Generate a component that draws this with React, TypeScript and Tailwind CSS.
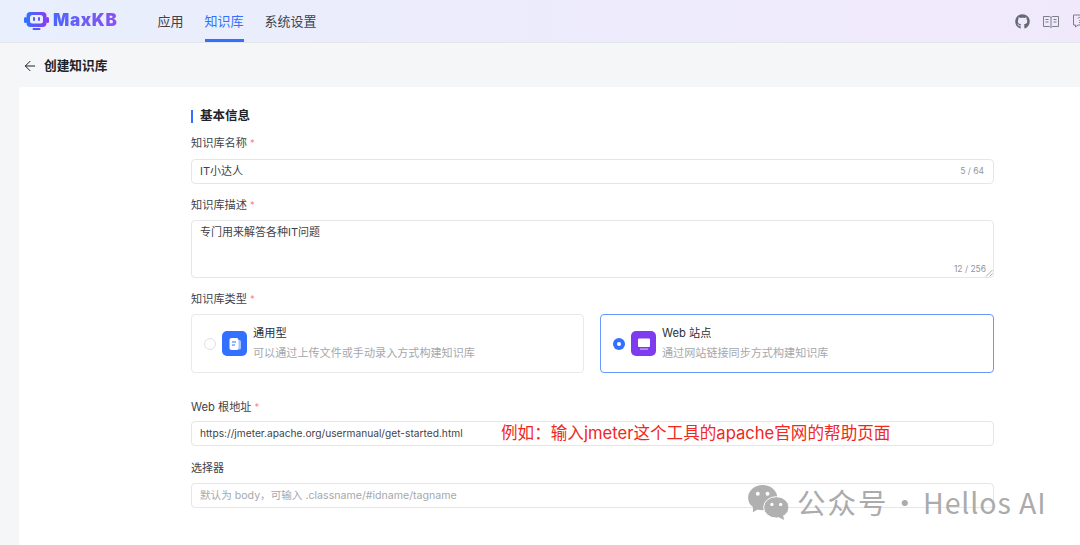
import React from "react";
import { ArrowLeft } from "lucide-react";
import { FaGithub } from "react-icons/fa";

const font = { fontFamily: '"Inter", "Noto Sans CJK SC", sans-serif' };

function Logo() {
  return (
    <svg width="25" height="20" viewBox="0 0 25 20">
      <defs>
        <linearGradient id="lg" x1="0" x2="1">
          <stop offset="0" stopColor="#3370ff" />
          <stop offset="1" stopColor="#8b3df5" />
        </linearGradient>
      </defs>
      <rect x="0" y="6" width="3" height="6" rx="1.5" fill="#3370ff" />
      <rect x="22" y="6" width="3" height="6" rx="1.5" fill="#8b3df5" />
      <rect x="2.5" y="1" width="20" height="15" rx="4" fill="url(#lg)" />
      <rect x="6" y="4" width="13" height="8.5" rx="2.5" fill="#e8effd" />
      <rect x="9" y="6" width="2" height="4" rx="1" fill="#5a55f8" />
      <rect x="14" y="6" width="2" height="4" rx="1" fill="#6a4ff8" />
      <rect x="8.5" y="17" width="8" height="2" rx="1" fill="#5a55f8" />
    </svg>
  );
}

function Label({ children }: { children: React.ReactNode }) {
  return (
    <div className="flex h-[18px] items-center text-[11.2px] leading-[18px] text-[#3f4349]">
      {children}
      <span className="ml-[3px] text-[9.5px] text-[#f78a85]">*</span>
    </div>
  );
}

function TypeCard({ selected, title, desc, color, icon, className }: { selected?: boolean; title: string; desc: string; color: string; icon: React.ReactNode; className: string }) {
  return (
    <div className={`flex h-[59px] items-center rounded-[4px] border pl-3 ${selected ? "border-[#6b98fb]" : "border-[#e8e9eb]"} ${className}`}>
      <div className={`mr-[6px] flex h-[12px] w-[12px] items-center justify-center rounded-full ${selected ? "bg-[#3370ff]" : "border border-[#dfe1e4] bg-white"}`}>
        {selected && <div className="h-[4px] w-[4px] rounded-full bg-white" />}
      </div>
      <div className="mr-[6px] flex h-[25px] w-[25px] items-center justify-center rounded-[5px]" style={{ backgroundColor: color }}>
        {icon}
      </div>
      <div className="-mt-[1px]">
        <div className="text-[11.2px] leading-[17px] text-[#2b2f36]">{title}</div>
        <div className="mt-[3px] text-[11.1px] leading-[17px] text-[#a5a8ad]">{desc}</div>
      </div>
    </div>
  );
}

export default function App() {
  return (
    <div className="relative h-[545px] w-[1080px] overflow-hidden bg-[#f5f6f7]" style={font}>
      {/* Header */}
      <div className="flex h-[43px] items-center border-b border-[#e4e6ea] bg-gradient-to-r from-[#e8effd] via-[#ecebfc] to-[#f1e9fb] pl-[24px]">
        <Logo />
        <span className="ml-[4px] bg-gradient-to-r from-[#4a66fb] to-[#8a4ff3] bg-clip-text text-[17px] font-black tracking-[0.7px] text-transparent">MaxKB</span>
        <nav className="ml-[40px] flex h-full gap-[21px] text-[13px]">
          <div className="flex items-center pt-[1px] text-[#3f4349]">应用</div>
          <div className="flex items-center border-b-[3px] border-[#3370ff] pt-[4px] text-[#3370ff]">知识库</div>
          <div className="flex items-center pt-[1px] text-[#3f4349]">系统设置</div>
        </nav>
        <div className="ml-auto flex items-center overflow-hidden text-[#646a73]">
          <FaGithub size={15} />
          <svg className="ml-[13px]" width="16" height="13" viewBox="0 0 16 13" fill="none" stroke="#7a7f87" strokeWidth="1">
            <path d="M.5 1.5h6l1.5 1 1.5-1h6v10h-6l-1.5 1-1.5-1h-6zM8 2.5v9M2.5 4.5h3M2.5 7h3M10.5 4.5h3M10.5 7h3" />
          </svg>
          <svg className="-mr-[9px] ml-[14px]" width="16" height="14" viewBox="0 0 16 14" fill="none" stroke="#7a7f87" strokeWidth="1">
            <path d="M.5 1h15v10H5l-2.5 2v-2h-2zM5 4.5C5 3 8 3 8 4.5 8 6 6.5 5.5 6.5 7M6.5 8v1" />
          </svg>
        </div>
      </div>

      {/* Page title */}
      <div className="flex h-[44px] items-center pl-[22px] pt-[1px] text-[#1f2329]">
        <ArrowLeft size={16} strokeWidth={1.5} />
        <span className="ml-[6px] text-[12.7px] font-semibold">创建知识库</span>
      </div>

      {/* Form panel */}
      <div className="ml-[19px] h-[458px] bg-white pl-[172px] pt-[20px]">
        <div className="w-[803px]">
          <div className="flex h-[18px] items-center">
            <div className="h-[13px] w-[2px] bg-[#3370ff]" />
            <span className="ml-[7px] text-[12.5px] font-semibold text-[#1f2329]">基本信息</span>
          </div>

          <div className="mt-[9px]"><Label>知识库名称</Label></div>
          <div className="mt-[7px] flex h-[25px] items-center justify-between rounded-[4px] border border-[#e4e6e9] pl-[8px] pr-[9px] text-[11px]">
            <span className="text-[#3f4349]">IT小达人</span>
            <span className="text-[8.5px] text-[#8f959e]">5 / 64</span>
          </div>

          <div className="mt-[12px]"><Label>知识库描述</Label></div>
          <div className="relative mt-[6px] h-[58px] rounded-[4px] border border-[#e4e6e9] pl-[8px] pt-[3px] text-[11px] leading-[17px] text-[#3f4349]">
            专门用来解答各种IT问题
            <span className="absolute bottom-[2px] right-[7px] text-[8.5px] leading-[12px] text-[#8f959e]">12 / 256</span>
            <svg className="absolute bottom-0 right-0" width="8" height="8" viewBox="0 0 8 8" stroke="#8f959e" strokeWidth="0.8">
              <path d="M1 7.5L7.5 1M4.5 7.5L7.5 4.5" />
            </svg>
          </div>

          <div className="mt-[12px]"><Label>知识库类型</Label></div>
          <div className="mt-[6px] flex gap-[16px]">
            <TypeCard
              className="w-[393px]"
              title="通用型"
              desc="可以通过上传文件或手动录入方式构建知识库"
              color="#3370ff"
              icon={
                <svg width="14" height="14" viewBox="0 0 14 14">
                  <rect x="7" y="3" width="6" height="9.5" rx="1.5" fill="#a9c3fd" />
                  <rect x="1.5" y="1" width="9" height="12" rx="2" fill="#fff" />
                  <path d="M4 5h4M4 8h3" stroke="#3370ff" strokeWidth="1.2" />
                </svg>
              }
            />
            <TypeCard
              className="w-[394px]"
              selected
              title="Web 站点"
              desc="通过网站链接同步方式构建知识库"
              color="#7f3bf0"
              icon={
                <svg width="14" height="14" viewBox="0 0 14 14">
                  <rect x="1" y="1.5" width="12" height="8.5" rx="1" fill="#fff" />
                  <rect x="3" y="11.5" width="8" height="1.2" fill="#cdb2fa" />
                </svg>
              }
            />
          </div>

          <div className="mt-[25px]"><Label>Web 根地址</Label></div>
          <div className="mt-[5px] flex h-[25px] items-center rounded-[4px] border border-[#e4e6e9] pl-[8px] text-[10.2px] text-[#3f4349]">
            https://jmeter.apache.org/usermanual/get-started.html
          </div>

          <div className="mt-[13px] h-[18px] text-[11px] leading-[18px] text-[#3f4349]">选择器</div>
          <div className="mt-[6px] flex h-[25px] items-center rounded-[4px] border border-[#e4e6e9] pl-[8px] text-[10.6px] text-[#a5a8ad]">
            默认为 body，可输入 .classname/#idname/tagname
          </div>
        </div>
      </div>

      {/* Annotation */}
      <div className="absolute left-[501px] top-[423px] text-[16.6px] leading-[21px] text-[#f0281e]">
        例如：输入jmeter这个工具的apache官网的帮助页面
      </div>

      {/* Watermark */}
      <div className="absolute left-[748px] top-[484px] flex items-center text-[#ababab]">
        <svg width="41" height="35" viewBox="0 0 42 36" fill="#b0b0b0">
          <ellipse cx="15" cy="13" rx="15" ry="13" />
          <path d="M5 22l0 6 7-4z" />
          <ellipse cx="29" cy="23" rx="13" ry="11" stroke="#fff" strokeWidth="1" />
          <path d="M36 31l1 5-6-3z" />
          <circle cx="10" cy="9" r="2" fill="#fff" />
          <circle cx="20" cy="9" r="2" fill="#fff" />
          <circle cx="24.5" cy="20" r="1.7" fill="#fff" />
          <circle cx="33.5" cy="20" r="1.7" fill="#fff" />
        </svg>
        <div className="ml-[8px] flex whitespace-pre text-[28.5px] leading-[36px]" style={{ fontFamily: '"Noto Sans CJK SC", sans-serif' }}>
          <span className="tracking-[2px]">公众号</span>
          <span className="ml-[2px] tracking-[1px]">·</span>
          <span className="ml-[3px] tracking-[0.9px]">Hellos AI</span>
        </div>
      </div>
    </div>
  );
}
